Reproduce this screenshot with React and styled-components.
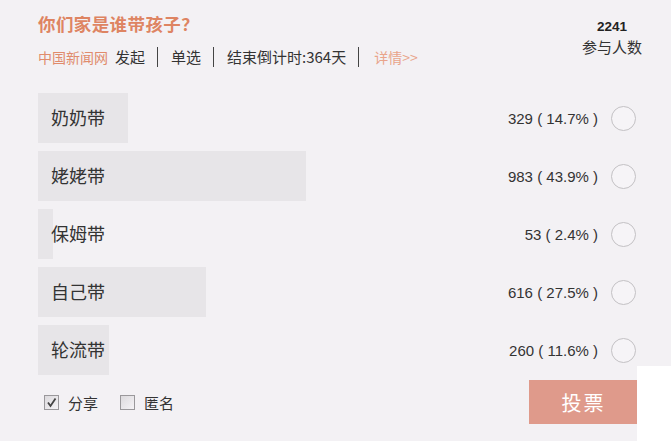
import React from "react";
import styled, { createGlobalStyle } from "styled-components";

const Global = createGlobalStyle`
  html, body { margin: 0; padding: 0; background: #f3f1f4; }
  body { font-family: "Noto Sans CJK SC", "Liberation Sans", sans-serif; color: #333; }
`;

const Page = styled.div`
  position: relative;
  width: 671px;
  height: 441px;
  box-sizing: border-box;
  padding: 13px 23px 0 38px;
  overflow: hidden;
  background: #f3f1f4;
`;

const Corner = styled.div`
  position: absolute;
  left: 637px;
  top: 366px;
  right: 0;
  bottom: 0;
  background: #ffffff;
`;

const Header = styled.header`
  display: flex;
  justify-content: space-between;
  align-items: flex-start;
  height: 80px;
`;

const Title = styled.h1`
  margin: 0;
  font-size: 17.5px;
  line-height: 22px;
  letter-spacing: 0.4px;
  font-weight: 700;
  color: #de8462;
`;

const Meta = styled.div`
  display: flex;
  align-items: center;
  margin-top: 11px;
  font-size: 15px;
  line-height: 22px;
  color: #333;
`;

const Source = styled.span`
  font-size: 14px;
  color: #e08b6c;
  margin-right: 7px;
`;

const Sep = styled.span`
  width: 1px;
  height: 20px;
  background: #444;
  margin: 0 13px 0 12px;
`;

const Detail = styled.a`
  color: #e9a48a;
  font-size: 14px;
  text-decoration: none;
  margin-left: 2px;
`;

const Stats = styled.div`
  width: 72px;
  margin-top: 5px;
  text-align: center;
`;

const Count = styled.div`
  font-family: "Liberation Sans", Arial, sans-serif;
  font-weight: 700;
  font-size: 13.5px;
  line-height: 18px;
  color: #222;
`;

const StatLabel = styled.div`
  font-size: 15px;
  line-height: 22px;
  color: #333;
`;

const Options = styled.div`
  display: grid;
  gap: 8px;
`;

const Row = styled.label`
  position: relative;
  display: flex;
  align-items: center;
  height: 50px;
`;

const Fill = styled.div`
  position: absolute;
  left: 0;
  top: 0;
  bottom: 0;
  background: #e7e5e8;
`;

const Label = styled.span`
  position: relative;
  flex: 1;
  padding-left: 13px;
  font-size: 18px;
  line-height: 24px;
  margin-top: -2px;
  color: #333;
`;

const Votes = styled.span`
  position: relative;
  margin-right: 13px;
  font-family: "Liberation Sans", Arial, sans-serif;
  font-size: 15px;
  color: #333;
  white-space: pre;
`;

const Radio = styled.span`
  position: relative;
  width: 23px;
  height: 23px;
  margin-right: 12px;
  border: 1px solid #c3c1c4;
  border-radius: 50%;
  background: #f6f4f7;
`;

const Footer = styled.footer`
  display: flex;
  align-items: center;
  margin-top: 5px;
  padding: 0 10px 0 6px;
`;

const Check = styled.span`
  display: inline-flex;
  align-items: center;
  font-size: 15px;
  color: #333;
  margin-right: 22px;
`;

const Box = styled.span`
  display: inline-flex;
  align-items: center;
  justify-content: center;
  width: 13px;
  height: 13px;
  margin-right: 9px;
  border: 1px solid #9a989b;
  background: linear-gradient(135deg, #dcdadd, #f5f3f6);
`;

const Spacer = styled.div`
  flex: 1;
`;

const VoteButton = styled.button`
  width: 109px;
  height: 44px;
  border: none;
  background: #df9a8b;
  color: #fff;
  font-family: "Noto Sans CJK SC", sans-serif;
  font-size: 20px;
  font-weight: 400;
  letter-spacing: 2px;
  cursor: pointer;
`;

const options = [
  { name: "奶奶带", votes: 329, pct: 14.7 },
  { name: "姥姥带", votes: 983, pct: 43.9 },
  { name: "保姆带", votes: 53, pct: 2.4 },
  { name: "自己带", votes: 616, pct: 27.5 },
  { name: "轮流带", votes: 260, pct: 11.6 },
];

export default function App() {
  return (
    <>
      <Global />
      <Page>
        <Header>
          <div>
            <Title>你们家是谁带孩子？</Title>
            <Meta>
              <Source>中国新闻网</Source>发起
              <Sep />单选
              <Sep />结束倒计时:364天
              <Sep />
              <Detail>详情&gt;&gt;</Detail>
            </Meta>
          </div>
          <Stats>
            <Count>2241</Count>
            <StatLabel>参与人数</StatLabel>
          </Stats>
        </Header>
        <Options>
          {options.map((o) => (
            <Row key={o.name}>
              <Fill style={{ width: `${o.pct}%` }} />
              <Label>{o.name}</Label>
              <Votes>{`${o.votes} ( ${o.pct}% )`}</Votes>
              <Radio />
            </Row>
          ))}
        </Options>
        <Footer>
          <Check>
            <Box>
              <svg width="11" height="11" viewBox="0 0 11 11">
                <path d="M2 5.5 L4.5 9 L9.5 1.5" fill="none" stroke="#444" strokeWidth="1.8" />
              </svg>
            </Box>
            分享
          </Check>
          <Check>
            <Box />
            匿名
          </Check>
          <Spacer />
          <VoteButton>投票</VoteButton>
        </Footer>
        <Corner />
      </Page>
    </>
  );
}
